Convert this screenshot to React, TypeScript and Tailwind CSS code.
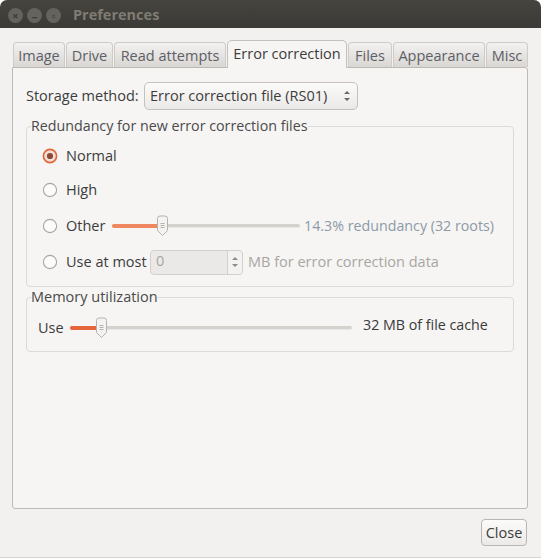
const font = { fontFamily: '"Open Sans", "Noto Sans", sans-serif' };

function Tab({ label, w, active }: { label: string; w: string; active?: boolean }) {
  return active ? (
    <div className={`${w} h-[28px] -mb-px z-10 flex items-center justify-center rounded-t-[5px] border border-b-0 border-[#c4c0bb] bg-[#f6f5f4] text-[#3c3c3c] pb-[1px] whitespace-nowrap`}>
      {label}
    </div>
  ) : (
    <div className={`${w} h-[25px] flex items-center justify-center rounded-t-[4px] border border-b-0 border-[#cfccc8] bg-gradient-to-b from-[#f3f2f1] to-[#d9d6d3] text-[#5d6066] pt-[2px] whitespace-nowrap`}>
      {label}
    </div>
  );
}

function Radio({ checked }: { checked?: boolean }) {
  return (
    <svg width="16" height="16" viewBox="0 0 16 16" className="shrink-0">
      <circle cx="8" cy="8" r="6.6" fill={checked ? "#f0e0d8" : "#fbfbfa"} stroke={checked ? "#e2643a" : "#a8a5a1"} strokeWidth={checked ? 1.6 : 1.1} />
      {checked && <circle cx="8" cy="8" r="3.1" fill="#8c4a34" />}
    </svg>
  );
}

function Slider({ w, fill, muted }: { w: string; fill: string; muted?: boolean }) {
  return (
    <div className={`${w} relative h-[22px] flex items-center`}>
      <div className="w-full h-[4px] rounded-full bg-[#d5d2ce] border-b border-[#e9e7e5]" />
      <div className={`absolute left-0 top-[9px] h-[4px] rounded-full ${fill} ${muted ? "bg-[#ef8860]" : "bg-[#e5643a]"}`} />
      <svg width="13" height="22" viewBox="0 0 13 22" className={`absolute top-0 ${fill === "w-[50px]" ? "left-[44px]" : "left-[25px]"}`}>
        <path d="M1.500 3.500a2.500 2.500 0 0 1 2.500-2.500h5a2.500 2.500 0 0 1 2.500 2.500v12L6.500 20.500 1.500 15.500z" fill="#f4f3f2" stroke="#b5b2ae" />
        <path d="M4.500 8.500h4M4.500 10.500h4M4.500 12.500h4" stroke="#b5b2ae" />
      </svg>
    </div>
  );
}

export default function App() {
  return (
    <div className="w-[541px] h-[560px] overflow-hidden bg-white text-[14.500px] text-[#3c3c3c] leading-[20px]" style={font}>
      <div className="h-[558px] rounded-t-[7px] bg-[#f2f1f0] flex flex-col border-b border-[#d8d5d1]">
        <div className="h-[28px] shrink-0 rounded-t-[7px] bg-gradient-to-b from-[#45443f] to-[#3b3a36] flex items-center pl-[8px] pt-[2px]">
          <div className="flex gap-[4px]">
            {["×", "–", "▫"].map((s, i) => (
              <div key={i} className="w-[15px] h-[15px] rounded-full bg-[#65635e] text-[#3b3a36] text-[11px] leading-[15px] text-center font-bold">{s}</div>
            ))}
          </div>
          <span className="ml-[12px] font-bold text-[14.500px] text-[#7f7c74]">Preferences</span>
        </div>

        <div className="flex-1 flex flex-col pl-[12px] pr-[13px] pt-[12px]">
          <div className="flex items-end gap-[1px] pl-[1px]">
            <Tab label="Image" w="w-[52px]" />
            <Tab label="Drive" w="w-[47px]" />
            <Tab label="Read attempts" w="w-[112px]" />
            <Tab label="Error correction" w="w-[120px]" active />
            <Tab label="Files" w="w-[44px]" />
            <Tab label="Appearance" w="w-[92px]" />
            <Tab label="Misc" w="w-[42px]" />
          </div>
          <div className="h-[442px] border border-[#bdb9b4] rounded-b-[3px] rounded-tr-[3px] bg-[#f6f5f4] pl-[13px] pr-[13px] pt-[14px]">
            <div className="flex items-center h-[28px]">
              <span className="w-[118px] whitespace-nowrap">Storage method:</span>
              <div className="w-[214px] h-[28px] rounded-[5px] border border-[#c4c1bd] bg-gradient-to-b from-[#fbfbfa] to-[#ebe9e7] flex items-center justify-between pl-[5px] pr-[6px]">
                <span className="whitespace-nowrap">Error correction file (RS01)</span>
                <svg width="8" height="14" viewBox="0 0 8 14"><path d="M1 5l3-3 3 3zM1 9l3 3 3-3z" fill="#6a6763" /></svg>
              </div>
            </div>

            <fieldset className="mt-[6px] h-[171px] border border-[#dcdad7] rounded-[4px]">
              <legend className="ml-[4px] text-[14.250px] text-[#4a4a4a] h-[20px]">Redundancy for new error correction files</legend>
              <div className="pl-[15px]">
                <div className="h-[24px] mt-[8px] flex items-center gap-[8px]">
                  <Radio checked /><span>Normal</span>
                </div>
                <div className="h-[24px] mt-[10px] flex items-center gap-[8px]">
                  <Radio /><span>High</span>
                </div>
                <div className="h-[24px] mt-[12px] flex items-center gap-[8px]">
                  <Radio /><span className="w-[38px]">Other</span>
                  <Slider w="w-[188px]" fill="w-[50px]" muted />
                  <span className="ml-[-4px] text-[14.250px] text-[#8d9aa5] whitespace-nowrap">14.3% redundancy (32 roots)</span>
                </div>
                <div className="h-[26px] mt-[11px] flex items-center gap-[8px]">
                  <Radio /><span className="w-[76px] whitespace-nowrap">Use at most</span>
                  <div className="w-[93px] h-[25px] rounded-[4px] border border-[#d3d0cc] bg-[#ebe9e7] flex">
                    <span className="flex-1 pl-[5px] text-[#a9a6a1]">0</span>
                    <div className="w-[15px] border-l border-[#d3d0cc] bg-[#f3f2f1] rounded-r-[4px] flex items-center justify-center">
                      <svg width="8" height="16" viewBox="0 0 8 16"><path d="M1 6l3-3 3 3zM1 10l3 3 3-3z" fill="#8e8b87" /></svg>
                    </div>
                  </div>
                  <span className="ml-[-3px] text-[#a9a6a1] whitespace-nowrap">MB for error correction data</span>
                </div>
              </div>
            </fieldset>

            <fieldset className="h-[65px] border border-[#dcdad7] rounded-[4px]">
              <legend className="ml-[4px] text-[14.500px] text-[#4a4a4a] h-[20px]">Memory utilization</legend>
              <div className="flex items-center h-[24px] mt-[9px] pl-[11px]">
                <span className="w-[32px]">Use</span>
                <Slider w="w-[282px]" fill="w-[31px]" />
                <span className="ml-[11px] pb-[7px] text-[14.250px] text-[#3a3a3a] whitespace-nowrap">32 MB of file cache</span>
              </div>
            </fieldset>
          </div>
          <div className="flex justify-end pt-[10px] pr-[1px]">
            <div className="w-[46px] h-[27px] pt-[1px] rounded-[4px] border border-[#b9b5b0] bg-gradient-to-b from-[#fbfbfa] to-[#eceae8] flex items-center justify-center">Close</div>
          </div>
        </div>
      </div>
    </div>
  );
}
